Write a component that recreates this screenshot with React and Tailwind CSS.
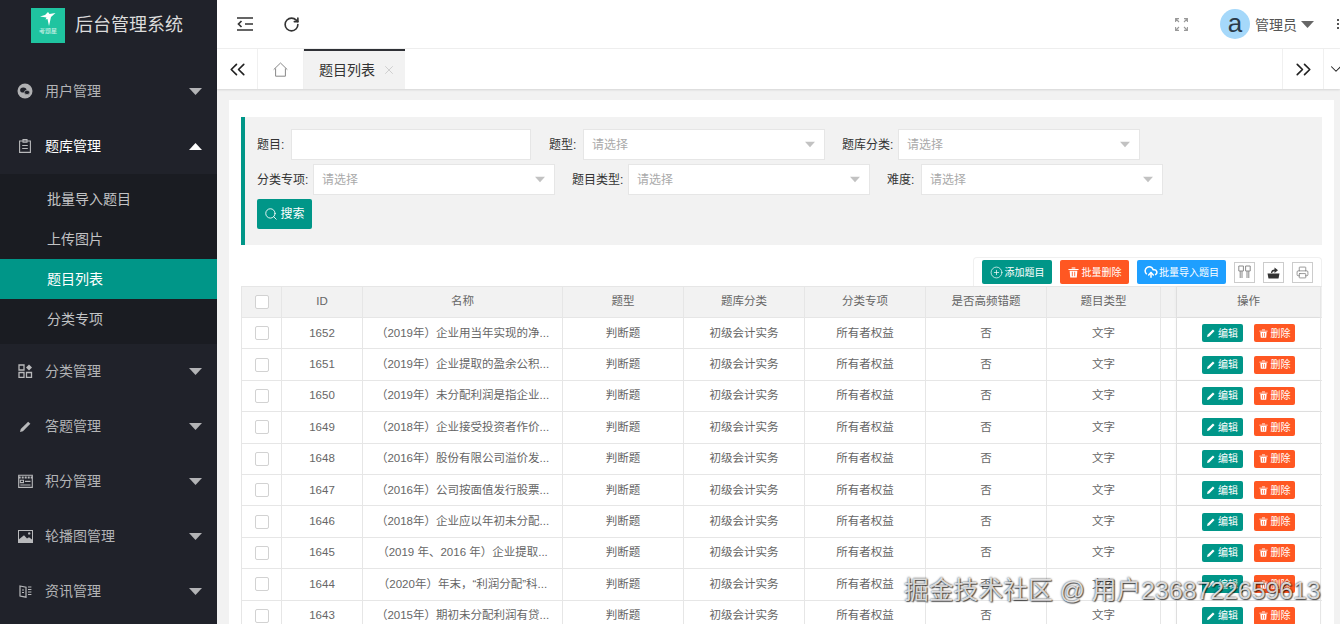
import React from 'react';
import { RotateCw, ChevronsLeft, ChevronsRight, ChevronDown, X, Search, CirclePlus, CloudUpload, Printer } from 'lucide-react';

const Caret = ({ dir = 'down', className = '' }) => (
  <svg width="13" height="7" viewBox="0 0 13 7" className={className}>
    <path d={dir === 'down' ? 'M0 0h13L6.5 7z' : 'M0 7h13L6.5 0z'} fill="currentColor" />
  </svg>
);

const WechatIcon = () => (
  <svg width="16" height="16" viewBox="0 0 16 16">
    <circle cx="8" cy="8" r="7.5" fill="#b0b1b3" />
    <ellipse cx="6.3" cy="7" rx="3.2" ry="2.6" fill="#20222a" />
    <ellipse cx="10" cy="9.4" rx="2.7" ry="2.2" fill="#20222a" stroke="#b0b1b3" strokeWidth="0.7" />
  </svg>
);

const BankIcon = () => (
  <svg width="12" height="14" viewBox="0 0 12 14" fill="none" stroke="#b8b9bb" strokeWidth="1.1">
    <path d="M.6 2h10.8v11.4H.6z" />
    <path d="M4 .6h4v2.6H4zM3.2 6.5h5.6M3.2 9.5h5.6" />
  </svg>
);

const CategoryIcon = () => (
  <svg width="15" height="14" viewBox="0 0 15 14" fill="none" stroke="#b8b9bb" strokeWidth="1.3">
    <path d="M1 1h5v5H1zM1 8.5h5v5H1zM8.5 8.5h5v5h-5z" />
    <path d="M11 .6l3 3-3 3-3-3z" fill="#b8b9bb" stroke="none" />
  </svg>
);

const PenIcon = ({ size = 11, color = '#b8b9bb' }) => (
  <svg width={size} height={size} viewBox="0 0 12 12">
    <path d="M0 12l.8-3.2L8.9.7l2.4 2.4-8.1 8.1z" fill={color} />
  </svg>
);

const ScoreIcon = () => (
  <svg width="15" height="14" viewBox="0 0 15 14" fill="none" stroke="#b8b9bb" strokeWidth="1.1">
    <path d="M.7 1.2h13.6v12.2H.7z" />
    <path d="M.7 3.6h13.6" strokeWidth="2" strokeDasharray="2 1" />
    <path d="M2.3 6.2h3.2v2.4H2.3zM7 7.4h5.5M2.3 11h10.2" />
  </svg>
);

const ImageIcon = () => (
  <svg width="15" height="13" viewBox="0 0 15 13">
    <path d="M0 0h15v13H0z" fill="#b8b9bb" />
    <path d="M1 1h13v8.5l-3-2.2-2 1.2-3-3.2-5 4z" fill="#20222a" />
    <circle cx="11.2" cy="3.4" r="1.2" fill="#b8b9bb" />
  </svg>
);

const NewsIcon = () => (
  <svg width="13" height="13" viewBox="0 0 13 13" fill="none" stroke="#b8b9bb" strokeWidth="1.2">
    <path d="M1 1l6 1.2v10L1 11z" />
    <path d="M3 5h2M3 7.5h2M9 2h3.4M9 4.5h3.4M9 7h3.4M9 9.5h3.4" />
  </svg>
);

const ShrinkIcon = () => (
  <svg width="16" height="14" viewBox="0 0 16 14" fill="none" stroke="#333" strokeWidth="1.7">
    <path d="M0 1h16M0 13h16M8 7h8" />
    <path d="M4.5 4L1.5 7l3 3" />
  </svg>
);

const HomeIcon = () => (
  <svg width="15" height="15" viewBox="0 0 15 15" fill="none" stroke="#888" strokeWidth="1">
    <path d="M.7 7.6L7.5 1l6.8 6.6M2.6 6.4v7.8h9.8V6.4" />
  </svg>
);

const FullIcon = () => (
  <svg width="13" height="13" viewBox="0 0 13 13" fill="none" stroke="#999" strokeWidth="1.1">
    <path d="M.6 4V.6H4M9 .6h3.4V4M.6 9v3.4H4M9 12.4h3.4V9M1 1l3 3M12 1L9 4M1 12l3-3M12 12L9 9" />
  </svg>
);

const ColsIcon = () => (
  <svg width="13" height="14" viewBox="0 0 13 14" fill="none" stroke="#8a8a8a" strokeWidth="1">
    <path d="M.8 1h4.600v5H.8zM7.600 1h4.600v5H7.600z" />
    <path d="M2.200 6v7M4 6v7M9 6v7M10.800 6v7" />
  </svg>
);

const ExportIcon = () => (
  <svg width="13" height="13" viewBox="0 0 13 13">
    <path d="M.5 7.500h12l-1 5h-10z" fill="#333" />
    <path d="M4 7c0-2.500 1.500-3.500 3.500-3.500V1.500L11 4.300 7.500 7V5.200C6 5.200 5.300 6 5.300 7z" fill="#333" />
  </svg>
);

const TrashIcon = ({ size = 10 }) => (
  <svg width={size} height={size} viewBox="0 0 12 12" fill="#fff">
    <path d="M.5 2.200h11v1.200H.5zM4 .5h4v1.200H4zM1.800 4h8.400l-.6 7.500H2.400zM4.200 5.200v5h.9v-5zM6.900 5.200v5h.9v-5z" fillRule="evenodd" />
  </svg>
);

const menus = [
  { name: '用户管理', icon: <WechatIcon /> },
  { name: '题库管理', icon: <BankIcon />, open: true },
  { name: '分类管理', icon: <CategoryIcon /> },
  { name: '答题管理', icon: <PenIcon /> },
  { name: '积分管理', icon: <ScoreIcon /> },
  { name: '轮播图管理', icon: <ImageIcon /> },
  { name: '资讯管理', icon: <NewsIcon /> },
];

const subMenus = ['批量导入题目', '上传图片', '题目列表', '分类专项'];

const rows = [
  [1652, '（2019年）企业用当年实现的净...'],
  [1651, '（2019年）企业提取的盈余公积...'],
  [1650, '（2019年）未分配利润是指企业...'],
  [1649, '（2018年）企业接受投资者作价...'],
  [1648, '（2016年）股份有限公司溢价发...'],
  [1647, '（2016年）公司按面值发行股票...'],
  [1646, '（2018年）企业应以年初未分配...'],
  [1645, '（2019 年、2016 年）企业提取...'],
  [1644, '（2020年）年末，“利润分配”科...'],
  [1643, '（2015年）期初未分配利润有贷...'],
];

const Sidebar = () => (
  <aside className="w-[217px] shrink-0 h-full bg-[#20222a] overflow-hidden">
    <div className="h-[63.5px] pl-[31px] pt-[8px] flex items-start">
      <div className="w-[34px] h-[35px] bg-[#1fc4a0] flex flex-col items-center pt-[4px]">
        <svg width="18" height="15" viewBox="0 0 18 15">
          <path d="M1 4.500l5-1.500 3-3 1.500 2 6-1-4.500 4-2 9-1.500-7-2 .5 1-2z" fill="#fff" />
        </svg>
        <span className="text-[6px] leading-[7px] text-white/80 mt-[1px] whitespace-nowrap">考题星</span>
      </div>
      <span className="ml-[10px] text-[18px] leading-[35px] text-[#dcdcdc]">后台管理系统</span>
    </div>
    {menus.map((m) => (
      <div key={m.name}>
        <div className="h-[55px] flex items-center pl-[17px] pr-[15px]">
          <span className="w-[16px] flex justify-center">{m.icon}</span>
          <span className={`ml-[12px] flex-1 text-[14px] ${m.open ? 'text-white' : 'text-[#b3b4b6]'}`}>{m.name}</span>
          <Caret dir={m.open ? 'up' : 'down'} className={m.open ? 'text-white' : 'text-[#b3b4b6]'} />
        </div>
        {m.open && (
          <div className="bg-[#1a1c22] py-[5px] h-[170px]">
            {subMenus.map((s) => (
              <div
                key={s}
                className={`h-[40px] leading-[40px] pl-[47px] text-[14px] ${s === '题目列表' ? 'bg-[#009688] text-white' : 'text-[#c2c3c5]'}`}
              >
                {s}
              </div>
            ))}
          </div>
        )}
      </div>
    ))}
  </aside>
);

const TopBar = () => (
  <div className="h-[49px] bg-white border-b border-[#f0f0f0] flex items-center pl-[20px]">
    <ShrinkIcon />
    <RotateCw size={17} strokeWidth={2.3} className="ml-[30px] text-[#333]" />
    <div className="ml-auto flex items-center">
      <FullIcon />
      <div className="ml-[32px] w-[30px] h-[30px] rounded-full bg-[#a5d8fa] flex items-center justify-center text-[26px] leading-none text-[#2a3a48] pb-[3px]">a</div>
      <span className="ml-[5px] text-[14px] text-[#555] pt-[2px]">管理员</span>
      <Caret className="ml-[4px] w-[13px] text-[#666]" />
      <div className="ml-[23px] w-[2px] flex flex-col gap-[2px] mr-[1px]">
        <span className="h-[2px] bg-[#555]" />
        <span className="h-[2px] bg-[#555]" />
        <span className="h-[2px] bg-[#555]" />
      </div>
    </div>
  </div>
);

const TabBar = () => (
  <div className="h-[40px] bg-white flex items-stretch shadow-[0_1px_2px_rgba(0,0,0,0.12)] relative">
    <div className="w-[41px] border-r border-[#f0f0f0] flex items-center justify-center">
      <ChevronsLeft size={25} strokeWidth={1.6} className="text-[#222]" />
    </div>
    <div className="w-[46px] border-r border-[#f0f0f0] flex items-center justify-center">
      <HomeIcon />
    </div>
    <div className="w-[101px] bg-[#f2f2f2] border-t-2 border-[#2f3136] flex items-center pl-[15px] text-[14px] text-[#333]">
      题目列表
      <X size={14} strokeWidth={1.1} className="ml-[7px] text-[#bbb]" />
    </div>
    <div className="ml-auto w-[41px] border-l border-[#f0f0f0] flex items-center justify-center">
      <ChevronsRight size={25} strokeWidth={1.6} className="text-[#222]" />
    </div>
    <div className="w-[17px] border-l border-[#f0f0f0] flex items-center pl-[3px] overflow-hidden">
      <ChevronDown size={18} strokeWidth={1.4} className="text-[#222] shrink-0" />
    </div>
  </div>
);

const Field = ({ label, labelW, select, inputW = 'w-[242px]' }) => (
  <div className="flex items-center">
    <label className={`text-[12px] text-[#333] whitespace-nowrap ${labelW}`}>{label}:</label>
    <div className={`${inputW} h-[31px] bg-white border border-[#e6e6e6] flex items-center pl-[8px] pr-[9px] text-[12px] text-[#aaa]`}>
      {select && <span className="flex-1">请选择</span>}
      {select && <Caret className="w-[10px] text-[#c2c2c2]" />}
    </div>
  </div>
);

const FilterBox = () => (
  <div className="h-[128px] bg-[#f2f2f2] border-l-4 border-[#009688] pl-[12px] pt-[12px]">
    <div className="flex gap-[17px]">
      <Field label="题目" labelW="w-[34px]" inputW="w-[240px]" />
      <Field label="题型" labelW="w-[35px] pl-[1px]" select />
      <Field label="题库分类" labelW="w-[56px]" select />
    </div>
    <div className="flex gap-[17px] mt-[4px]">
      <Field label="分类专项" labelW="w-[56px]" select />
      <Field label="题目类型" labelW="w-[56px]" select />
      <Field label="难度" labelW="w-[34px]" select />
    </div>
    <button className="mt-[4px] w-[55px] h-[30px] bg-[#009688] rounded-[2px] text-white text-[12px] flex items-center justify-center">
      <Search size={14} strokeWidth={1.5} className="mr-[2px]" />
      搜索
    </button>
  </div>
);

const ToolIcon = ({ children, className = '' }) => (
  <div className={`w-[21px] h-[21px] border border-[#ccc] flex items-center justify-center text-[#333] ${className}`}>
    {children}
  </div>
);

const Toolbar = () => (
  <div className="h-[29px] flex justify-end mt-[12px]">
    <div className="w-[349px] h-[29px] border border-b-0 border-[#f0f0f0] rounded-tl-[4px] rounded-tr-[4px] flex items-center pl-[8px] pr-[8px] text-white text-[10px]">
      <button className="w-[70px] h-[24px] bg-[#009688] rounded-[2px] flex items-center justify-center">
        <CirclePlus size={13} strokeWidth={1.3} className="mr-[2px]" />添加题目
      </button>
      <button className="ml-[8px] w-[69px] h-[24px] bg-[#ff5722] rounded-[2px] flex items-center justify-center">
        <span className="mr-[3px]"><TrashIcon size={11} /></span>批量删除
      </button>
      <button className="ml-[8px] w-[89px] h-[24px] bg-[#1e9fff] rounded-[2px] flex items-center justify-center">
        <CloudUpload size={14} strokeWidth={2.6} className="mr-[1px]" />批量导入题目
      </button>
      <ToolIcon className="ml-[8px]"><ColsIcon /></ToolIcon>
      <ToolIcon className="ml-[8px]"><ExportIcon /></ToolIcon>
      <ToolIcon className="ml-[8px]"><Printer size={13} strokeWidth={1.2} className="text-[#666]" /></ToolIcon>
    </div>
  </div>
);

const Checkbox = () => <span className="w-[14px] h-[14px] bg-white border border-[#d2d2d2] rounded-[2px]" />;

const Cell = ({ children, last, className = '' }) => (
  <div className={`flex items-center justify-center text-[11.5px] text-[#666] whitespace-nowrap overflow-hidden ${last ? '' : 'border-r border-[#e6e6e6]'} ${className}`}>
    {children}
  </div>
);

const gridCols = 'grid grid-cols-[40px_81px_200px_121px_121px_121px_121px_114px_16px_144px]';

const fixedCol = 'shadow-[-1px_0_3px_rgba(0,0,0,0.05)] relative border-r border-[#e6e6e6]';

const Table = () => (
  <div className="border-l border-[#e6e6e6]">
    <div className={`${gridCols} h-[32px] bg-[#f2f2f2] border-y border-[#e6e6e6]`}>
      <Cell><Checkbox /></Cell>
      {['ID', '名称', '题型', '题库分类', '分类专项', '是否高频错题', '题目类型', ''].map((h, i) => (
        <Cell key={i}>{h}</Cell>
      ))}
      <Cell last className={fixedCol}>操作</Cell>
    </div>
    {rows.map(([id, title]) => (
      <div key={id} className={`${gridCols} h-[31.4px] border-b border-[#e6e6e6]`}>
        <Cell><Checkbox /></Cell>
        <Cell>{id}</Cell>
        <Cell>{title}</Cell>
        <Cell>判断题</Cell>
        <Cell>初级会计实务</Cell>
        <Cell>所有者权益</Cell>
        <Cell>否</Cell>
        <Cell>文字</Cell>
        <Cell />
        <Cell last className={`${fixedCol} bg-white gap-[11px] text-white`}>
          <button className="w-[41px] h-[18px] bg-[#009688] rounded-[2px] text-white text-[10px] flex items-center justify-center">
            <span className="mr-[3px]"><PenIcon size={8} color="#fff" /></span>编辑
          </button>
          <button className="w-[41px] h-[18px] bg-[#ff5722] rounded-[2px] text-white text-[10px] flex items-center justify-center">
            <span className="mr-[3px]"><TrashIcon size={9} /></span>删除
          </button>
        </Cell>
      </div>
    ))}
  </div>
);

export default function App() {
  return (
    <div className="relative w-[1340px] h-[624px] overflow-hidden flex font-['Liberation_Sans','Noto_Sans_CJK_SC',sans-serif]">
      <Sidebar />
      <main className="flex-1 min-w-0 flex flex-col">
        <TopBar />
        <TabBar />
        <div className="flex-1 min-h-0 bg-[#f2f2f2] pl-[12px] pr-[6px] pt-[11px] overflow-hidden">
          <div className="bg-white h-full pl-[12px] pr-[12px] pt-[17px] overflow-hidden">
            <FilterBox />
            <Toolbar />
            <Table />
          </div>
        </div>
      </main>
      <div className="absolute left-[904px] top-[576px] text-[24.8px] leading-[30px] whitespace-nowrap text-white/80 [text-shadow:0_0_2px_rgba(0,0,0,0.9),1px_1px_1px_rgba(0,0,0,0.6)]">
        掘金技术社区 @ 用户2368722659613
      </div>
    </div>
  );
}
